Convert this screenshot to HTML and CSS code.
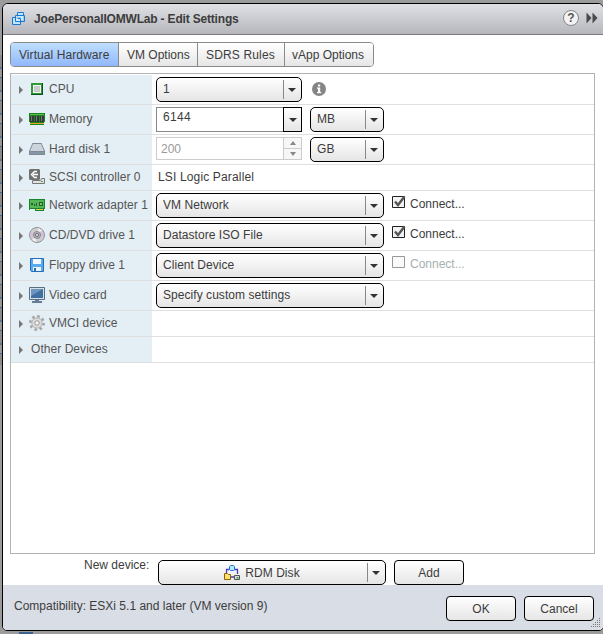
FILE: index.html
```
<!DOCTYPE html>
<html lang="en">
<head>
<meta charset="utf-8">
<title>Edit Settings</title>
<link rel="stylesheet" href="styles.css">
</head>
<body>
<div class="dialog">
  <header class="titlebar">
    <svg class="vm" width="14" height="14" viewBox="0 0 14 14"><g fill="#bfe6fb" stroke="#1b78cf"><path d="M5.500 .5h6v8h-6z"/><path d="M.5 5.500h8v7h-8z"/><path d="M3.500 3.500h9v6h-9z" fill="#d5f0fd" fill-opacity=".7"/><path d="M5.500 6.500h3v3" fill="none"/></g></svg>
    <h1>JoePersonalIOMWLab - Edit Settings</h1>
    <span class="help">?</span>
    <svg class="more" width="12" height="12" viewBox="0 0 12 12"><path d="M.5 .5l5 5.500-5 5.500zM6.500 .5l5 5.500-5 5.500z" fill="#4a4a4c"/></svg>
  </header>
  <main class="body">
    <nav class="tabs"><span class="tab on t1">Virtual Hardware</span><span class="tab t2">VM Options</span><span class="tab t3">SDRS Rules</span><span class="tab t4">vApp Options</span></nav>
    <section class="panel">
      <div class="row">
        <div class="name"><i class="tri"></i><svg width="16" height="16" viewBox="0 0 16 16"><path d="M2 2h12v12H2z" fill="#0b5420"/><path d="M2 2h11v11H2z" fill="#2f9a38"/><path d="M4 4h8v8H4z" fill="#f4f4f4"/><path d="M5 5h6v6H5z" fill="#cbcbcb"/></svg><span>CPU</span></div>
        <div class="value"><div class="select w146"><span>1</span><b></b></div><svg class="info" width="14" height="14" viewBox="0 0 14 14"><circle cx="7" cy="7" r="7" fill="#858585"/><path d="M6 2.500h2.200v2H6zM5 5.500h3.200v4.500h1v1.300H5V10h1V6.800H5z" fill="#fff"/></svg></div>
      </div>
      <div class="row">
        <div class="name"><i class="tri"></i><svg width="16" height="16" viewBox="0 0 16 16"><path d="M0 2h16v9h-1v3H1v-3H0z" fill="#17841e"/><path d="M1 3h14v1H1z" fill="#63bc49"/><path d="M1 5h4v6H1zM6 5h4v6H6zM11 5h4v6h-4z" fill="#343a38"/><path d="M2 5h1v5H2zM7 5h1v5H7zM12 5h1v5h-1z" fill="#777"/><path d="M1 12h14v1H1z" fill="#eaa52e"/></svg><span>Memory</span></div>
        <div class="value"><div class="combo"><span>6144</span><b></b></div><div class="select w74"><span>MB</span><b></b></div></div>
      </div>
      <div class="row">
        <div class="name"><i class="tri"></i><svg width="16" height="16" viewBox="0 0 16 16"><path d="M3.500 2h9L16 10v4H0v-4z" fill="#7d8899"/><path d="M4 3h8l3 7H1z" fill="#cbd3dd"/><path d="M1 11h14v2H1z" fill="#8994a5"/><path d="M12 11h2v1h-2z" fill="#4ec44d"/></svg><span>Hard disk 1</span></div>
        <div class="value"><div class="spinner"><span>200</span><em><u></u><b></b></em></div><div class="select w74"><span>GB</span><b></b></div></div>
      </div>
      <div class="row short">
        <div class="name"><i class="tri"></i><svg width="16" height="16" viewBox="0 0 16 16"><path d="M1 0h9l1 1v9l-1 1H1l-1-1V1z" fill="#707070"/><path d="M8 2.500H5.500l-3 3 3 3H8M4 5.500h5" fill="none" stroke="#fff" stroke-width="1.400"/><path d="M3.500 11.500h8l1-2h3v5h-12z" fill="#e1e1e1" stroke="#777"/><path d="M12 12h2v1h-2z" fill="#3eb447"/></svg><span>SCSI controller 0</span></div>
        <div class="value plain">LSI Logic Parallel</div>
      </div>
      <div class="row">
        <div class="name"><i class="tri"></i><svg width="16" height="16" viewBox="0 0 16 16"><path d="M0 2h16v10h-1v2H6v-2H1v1H0z" fill="#168431"/><path d="M1 3h14v8H1z" fill="#53b854"/><path d="M2 6h2v2H2zM5 7h1v2H5zM7 6h1v3H7zM10 5h4v4h-4z" fill="#275c31"/><path d="M11 6h2v2h-2z" fill="#77c76e"/><path d="M7 12h7v1H7z" fill="#edcb4c"/></svg><span>Network adapter 1</span></div>
        <div class="value"><div class="select w228"><span>VM Network</span><b></b></div><label class="check"><svg width="14" height="14" viewBox="0 0 14 14"><path d="M.5 1.500h12v11H.5z" fill="#f3f3f3" stroke="#222"/><path d="M3 6.500l3 3.500 6.500-8.500" fill="none" stroke="#555" stroke-width="2.400"/></svg>Connect...</label></div>
      </div>
      <div class="row">
        <div class="name"><i class="tri"></i><svg width="16" height="16" viewBox="0 0 16 16"><circle cx="8" cy="8" r="7.500" fill="#cfcfd2" stroke="#909095"/><path d="M8 8L1.500 5v5zM8 8l6-4 1 5z" fill="#d7b9e2"/><path d="M8 8l-5 5 4 2zM8 8l5-5-4-2z" fill="#eee"/><circle cx="8" cy="8" r="3.500" fill="#b7b7bf" stroke="#85858d"/><circle cx="8" cy="8" r="1.500" fill="#fff" stroke="#666"/></svg><span>CD/DVD drive 1</span></div>
        <div class="value"><div class="select w228"><span>Datastore ISO File</span><b></b></div><label class="check"><svg width="14" height="14" viewBox="0 0 14 14"><path d="M.5 1.500h12v11H.5z" fill="#f3f3f3" stroke="#222"/><path d="M3 6.500l3 3.500 6.500-8.500" fill="none" stroke="#555" stroke-width="2.400"/></svg>Connect...</label></div>
      </div>
      <div class="row">
        <div class="name"><i class="tri"></i><svg width="16" height="16" viewBox="0 0 16 16"><path d="M1.500 1.500h13v13h-12l-1-1z" fill="#5aaaf0" stroke="#236dbd"/><path d="M4 2h8v5H4z" fill="#f3f9ff"/><path d="M4 10h8v4H4z" fill="#eef5fb"/><path d="M5 11h2v3H5z" fill="#236dbd"/></svg><span>Floppy drive 1</span></div>
        <div class="value"><div class="select w228"><span>Client Device</span><b></b></div><label class="check off"><svg width="14" height="14" viewBox="0 0 14 14"><path d="M.5 1.500h12v11H.5z" fill="#fafafa" stroke="#999"/></svg>Connect...</label></div>
      </div>
      <div class="row">
        <div class="name"><i class="tri"></i><svg width="16" height="16" viewBox="0 0 16 16"><path d="M.5 .5h15v12H.5z" fill="#d5e0e8" stroke="#586e86"/><path d="M2 2h12v9H2z" fill="#416f9f"/><path d="M2 2h12L2 9z" fill="#6e95bd"/><path d="M6 13h4v1h3v2H3v-2h3z" fill="#657c92"/></svg><span>Video card</span></div>
        <div class="value"><div class="select w228"><span>Specify custom settings</span><b></b></div></div>
      </div>
      <div class="row short">
        <div class="name"><i class="tri"></i><svg width="16" height="16" viewBox="0 0 16 16"><circle cx="8" cy="8" r="6.700" fill="none" stroke="#a5a5a5" stroke-width="2.500" stroke-dasharray="2.600 2.660"/><circle cx="8" cy="8" r="5.200" fill="#dadada" stroke="#b4b4b4"/><circle cx="8" cy="8" r="2.200" fill="#f7f7f7" stroke="#999"/></svg><span>VMCI device</span></div>
        <div class="value"></div>
      </div>
      <div class="row short">
        <div class="name"><i class="tri"></i><span class="other">Other Devices</span></div>
        <div class="value"></div>
      </div>
    </section>
    <div class="device"><span class="dlabel">New device:</span><div class="select w228 rdm"><span><svg width="16" height="16" viewBox="0 0 16 16"><path d="M2.500 8V4.500h3M10 4.500h3.500V9M7 12h4" fill="none" stroke="#5636ba" stroke-width="1.300"/><path d="M6.500 .5h3l1 1v3l-1 1h-3l-1-1v-3z" fill="#b8e6ff" stroke="#1679cd"/><path d="M.5 8.500h3l1 1h2v5h-6z" fill="#ffe16b" stroke="#8a6210"/><path d="M10.500 10.500h5v4h-5z" fill="#ddd" stroke="#555"/><path d="M12.500 12h2v1.500h-2z" fill="#28a736"/></svg>RDM Disk</span><b></b></div><button>Add</button></div>
  </main>
  <footer><span class="compat">Compatibility: ESXi 5.1 and later (VM version 9)</span><button>OK</button><button>Cancel</button>
  <svg class="grip" width="10" height="10" viewBox="0 0 10 10"><path d="M8 0h1v1H8zM6 2h1v1H6zM8 2h1v1H8zM4 4h1v1H4zM6 4h1v1H6zM8 4h1v1H8zM2 6h1v1H2zM4 6h1v1H4zM6 6h1v1H6zM8 6h1v1H8zM0 8h1v1H0zM2 8h1v1H2zM4 8h1v1H4zM6 8h1v1H6zM8 8h1v1H8z" fill="#777"/></svg></footer>
</div>
</body>
</html>
```
FILE: styles.css
```
* { box-sizing: border-box; }
body {
  margin: 0; width: 603px; height: 634px; padding: 3px 0 0 2px; overflow: hidden;
  background: linear-gradient(#3e6290 0 0) 19px 632px / 14px 2px no-repeat, repeating-linear-gradient(#8b8b8b 0 12px, #5b7893 12px 14px, #999 14px 22px, #456f9b 22px 23px) 0 55px / 2px 310px no-repeat, #9b9b9b;
  font: 12px/14px "Liberation Sans", Arial, sans-serif; color: #3c3c3c;
}
.dialog { width: 602px; height: 628px; border: 1px solid #000; border-radius: 6px 6px 5px 5px; overflow: hidden; background: #fff; display: flex; flex-direction: column; }
.titlebar { height: 31px; flex: none; display: flex; align-items: center; background: linear-gradient(#e0e1e5, #b6b7bc); border-bottom: 1px solid #7c7c80; padding-left: 9px; }
.titlebar h1 { font-size: 12px; line-height: 14px; margin: 0 0 0 8px; flex: 1; letter-spacing: -.18px; }
.help { width: 16px; height: 16px; margin-top: -2px; border: 1px solid #858585; border-radius: 50%; background: #f3f3f3; text-align: center; font-weight: bold; line-height: 14px; color: #555; }
.more { margin: -2px 5px 0 7px; }
.body { height: 550px; padding: 7px 0 0 7px; }
.tabs { display: flex; width: 364px; height: 25px; border: 1px solid #8a8a8a; border-radius: 4px; overflow: hidden; }
.tab { padding-left: 8px; line-height: 24px; background: linear-gradient(#fff, #e6e6e6); border-left: 1px solid #8a8a8a; white-space: nowrap; }
.tab.on { background: linear-gradient(#bedfff, #91b8fb); border-left: 0; }
.t1 { width: 107px; letter-spacing: .08px; } .t2 { width: 79px; } .t3 { width: 87px; letter-spacing: .15px; } .t4 { width: 89px; padding-left: 7px; }
.panel { margin-top: 6px; width: 585px; height: 481px; border: 1px solid #b3b3b3; padding-top: 1px; }
.row { display: flex; height: 30px; border-bottom: 1px solid #dfdfdf; }
.row.short { height: 26px; }
.name { width: 141px; background: #e4eff5; display: flex; align-items: center; color: #555; white-space: nowrap; letter-spacing: .05px; }
.name span { transform: translateY(-1px); }
.name svg { margin: -1px 4px 0 6px; flex: none; }
.name .other { margin-left: 8px; }
.tri { margin-left: 8px; border: solid transparent; border-width: 4px 0 4px 4px; border-left-color: #777; }
.value { display: flex; flex: 1; padding: 2px 0 0 4px; }
.value.plain { padding: 0 0 1px 6px; align-items: center; letter-spacing: .15px; }
.select { height: 25px; border: 1px solid #000; border-radius: 5px; background: linear-gradient(#fff, #e5e5e5); display: flex; line-height: 22px; letter-spacing: .05px; }
.select > span { flex: 1; padding-left: 6px; }
.select > b { width: 18px; margin: 2px 0; padding-right: 1px; border-left: 1px solid #888; display: grid; place-items: center; }
.select > b::after, .combo > b::after { content: ""; border: solid transparent; border-width: 4px 4px 0; border-top-color: #333; }
.w146 { width: 146px; } .w74 { width: 74px; margin-left: 8px; } .w228 { width: 228px; }
.info { margin: 5px 0 0 10px; }
.combo { width: 146px; height: 25px; border: 1px solid #888; display: flex; line-height: 18px; letter-spacing: .3px; }
.combo span { flex: 1; padding-left: 6px; }
.combo b { width: 19px; margin: -1px; border: 1px solid #000; display: grid; place-items: center; background: linear-gradient(#fff, #e5e5e5); }
.spinner { width: 146px; height: 23px; border: 1px solid #ccc; display: flex; line-height: 22px; color: #999; }
.spinner span { flex: 1; padding-left: 4px; }
.spinner em { width: 18px; border-left: 1px solid #ccc; display: grid; grid-template-rows: 10px 11px; background: #f7f7f7; }
.spinner u, .spinner em b { display: grid; place-items: center; }
.spinner em b { border-top: 1px solid #ccc; }
.spinner u::after, .spinner em b::after { content: ""; border: solid transparent; border-width: 0 3px 4px; border-bottom-color: #888; }
.spinner em b::after { border-width: 4px 3px 0; border-top-color: #888; }
.check { display: flex; margin-left: 8px; height: 14px; margin-top: 4px; }
.check svg { margin: 0 4px 0 0; transform: translateY(-2px); }
.check.off { color: #a5b0b0; }
.device { display: flex; padding: 6px 0 0 74px; }
.dlabel { width: 74px; line-height: 11px; }
.rdm { width: 228px; line-height: 24px; }
.rdm > span { display: flex; justify-content: center; padding: 0 2px 0 0; }
.rdm svg { margin: 4px 5px 0 0; }
button { width: 70px; height: 25px; border: 1px solid #000; border-radius: 4px; background: linear-gradient(#fff, #e6e6e6); font: inherit; color: #3c3c3c; padding: 0; margin-left: 8px; }
footer { position: relative; height: 45px; background: #d9dde5; display: flex; padding: 11px 9px 0 11px; }
.compat { flex: 1; line-height: 20px; }
.grip { position: absolute; right: 2px; bottom: 2px; }
```
